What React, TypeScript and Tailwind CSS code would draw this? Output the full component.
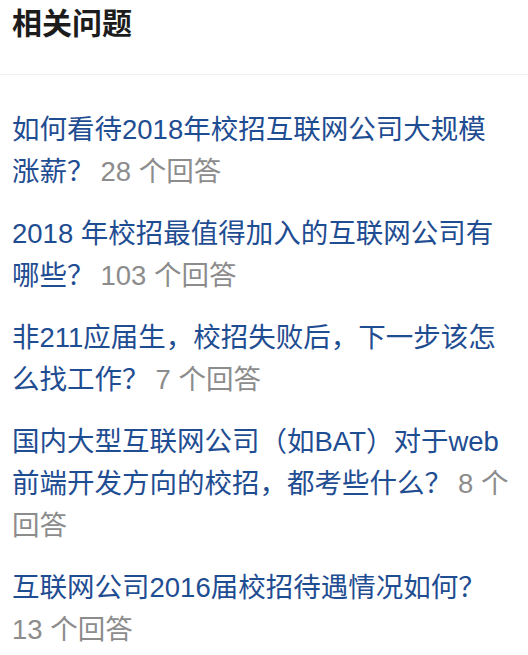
const questions: { lines: [string, "q" | "c"][][] }[] = [
  {
    lines: [
      [["如何看待2018年校招互联网公司大规模", "q"]],
      [["涨薪？", "q"], ["28 个回答", "c"]],
    ],
  },
  {
    lines: [
      [["2018 年校招最值得加入的互联网公司有", "q"]],
      [["哪些？", "q"], ["103 个回答", "c"]],
    ],
  },
  {
    lines: [
      [["非211应届生，校招失败后，下一步该怎", "q"]],
      [["么找工作？", "q"], ["7 个回答", "c"]],
    ],
  },
  {
    lines: [
      [["国内大型互联网公司（如BAT）对于web", "q"]],
      [["前端开发方向的校招，都考些什么？", "q"], ["8 个", "c"]],
      [["回答", "c"]],
    ],
  },
  {
    lines: [
      [["互联网公司2016届校招待遇情况如何？", "q"]],
      [["13 个回答", "c"]],
    ],
  },
]

export default function App() {
  return (
    <div
      className="w-[528px] h-[655px] bg-white overflow-hidden"
      style={{ fontFamily: '"Liberation Sans", "Noto Sans CJK SC", sans-serif' }}
    >
      {/* header */}
      <div className="px-3 pt-1.5 h-[75px] border-b border-[#f1f1f1]">
        <h2 className="text-[30px] leading-[36px] font-semibold text-[#1c1c1c]">相关问题</h2>
      </div>

      {/* question list */}
      <div className="px-3 pt-[34px] flex flex-col gap-5">
        {questions.map((q, i) => (
          <div key={i} className="text-[27.5px] leading-[42px]">
            {q.lines.map((line, j) => (
              <div key={j} className="whitespace-nowrap">
                {line.map(([text, kind], k) =>
                  kind === "q" ? (
                    <span key={k} className="text-[#1f4d92]">{text}</span>
                  ) : (
                    <span key={k} className={`text-[#8c8c8c] ${k > 0 ? "ml-[6px]" : ""}`}>{text}</span>
                  )
                )}
              </div>
            ))}
          </div>
        ))}
      </div>
    </div>
  )
}
